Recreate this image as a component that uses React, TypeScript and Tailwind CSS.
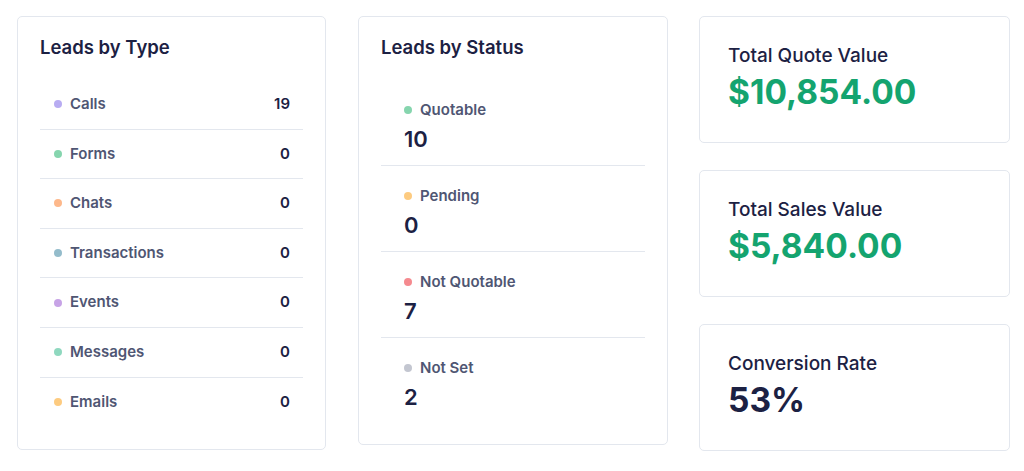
const leadTypes = [
  { label: 'Calls', value: 19, dot: 'bg-[#b8acf2]' },
  { label: 'Forms', value: 0, dot: 'bg-[#86d5ae]' },
  { label: 'Chats', value: 0, dot: 'bg-[#fdb88b]' },
  { label: 'Transactions', value: 0, dot: 'bg-[#94bccb]' },
  { label: 'Events', value: 0, dot: 'bg-[#c7a3e6]' },
  { label: 'Messages', value: 0, dot: 'bg-[#8fd8bf]' },
  { label: 'Emails', value: 0, dot: 'bg-[#fdcb80]' },
]

const leadStatuses = [
  { label: 'Quotable', value: 10, dot: 'bg-[#86d5ae]' },
  { label: 'Pending', value: 0, dot: 'bg-[#fdcb80]' },
  { label: 'Not Quotable', value: 7, dot: 'bg-[#f58a8f]' },
  { label: 'Not Set', value: 2, dot: 'bg-[#c3c6d0]' },
]

const stats = [
  { label: 'Total Quote Value', value: '$10,854.00', tone: 'text-[#14a46f]' },
  { label: 'Total Sales Value', value: '$5,840.00', tone: 'text-[#14a46f]' },
  { label: 'Conversion Rate', value: '53%', tone: 'text-[#1c2143]' },
]

export default function App() {
  return (
    <div className="flex h-[471px] w-[1024px] bg-white pl-[17px] pt-[16px] font-['Inter',sans-serif] text-[#1c2143]">
      <section className="h-[434px] w-[309px] rounded-[5px] border border-[#e3e7ee] bg-white">
        <h2 className="px-[22px] pt-[16px] text-[18.5px] font-semibold leading-[28px]">Leads by Type</h2>
        <ul className="mx-[22px] mt-[19px]">
          {leadTypes.map((item, i) => (
            <li
              key={item.label}
              className={`flex h-[49.6px] items-center pl-[14px] pr-[13px] ${i < leadTypes.length - 1 ? 'border-b border-[#e3e7ee]' : ''}`}
            >
              <span className={`mr-2 h-2 w-2 rounded-full ${item.dot}`} />
              <span className="text-[15px] font-semibold text-[#4f5673]">{item.label}</span>
              <span className="ml-auto text-[15px] font-semibold">{item.value}</span>
            </li>
          ))}
        </ul>
      </section>

      <section className="ml-[32px] h-[429px] w-[310px] rounded-[5px] border border-[#e3e7ee] bg-white">
        <h2 className="px-[22px] pt-[16px] text-[18.5px] font-semibold leading-[28px]">Leads by Status</h2>
        <ul className="mx-[22px] mt-[19px]">
          {leadStatuses.map((item, i) => (
            <li
              key={item.label}
              className={`pb-[10px] pl-[23px] pt-5 ${i < leadStatuses.length - 1 ? 'border-b border-[#e3e7ee]' : ''}`}
            >
              <div className="flex items-center">
                <span className={`mr-2 h-2 w-2 rounded-full ${item.dot}`} />
                <span className="text-[15px] font-semibold leading-5 text-[#4f5673]">{item.label}</span>
              </div>
              <p className="mt-[3px] text-[22px] font-semibold leading-8">{item.value}</p>
            </li>
          ))}
        </ul>
      </section>

      <div className="ml-[31px] flex w-[311px] flex-col gap-[27px]">
        {stats.map((stat) => (
          <div key={stat.label} className="h-[127px] rounded-[5px] border border-[#e3e7ee] bg-white px-[28px] pt-[27px]">
            <p className="text-[19px] font-medium leading-6">{stat.label}</p>
            <p className={`mt-1 text-[33.5px] font-bold leading-10 ${stat.tone}`}>{stat.value}</p>
          </div>
        ))}
      </div>
    </div>
  )
}
